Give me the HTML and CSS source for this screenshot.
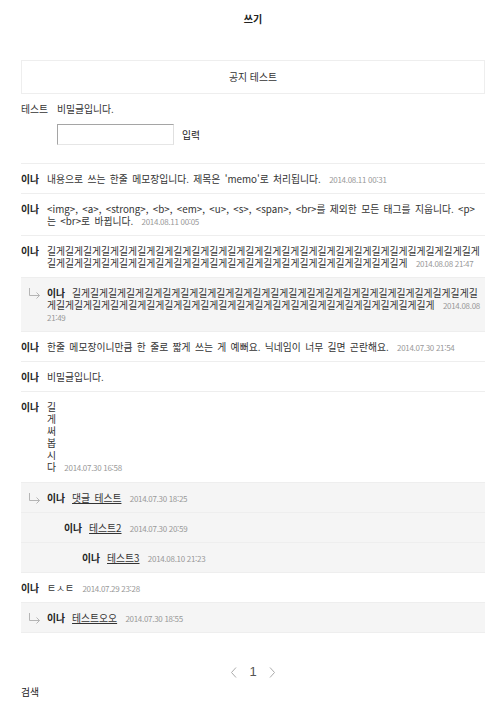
FILE: index.html
```html
<!DOCTYPE html>
<html lang="ko">
<head>
  <meta charset="UTF-8">
  <meta name="viewport" content="width=device-width, height=device-height">
  <link rel="stylesheet" href="styles.css">
</head>
<body>
  <div class="wrap">
    <h1 class="title">쓰기</h1>

    <div class="notice">공지 테스트</div>

    <form class="secret" onsubmit="return false">
      <span class="label">테스트</span>
      <span>비밀글입니다.</span>
      <span></span>
      <span class="field">
        <input type="password" class="pw">
        <button class="enter">입력</button>
      </span>
    </form>

    <ul class="memo-list">
      <li class="memo">
        <span class="nick">이나</span>
        <div class="text">내용으로 쓰는 한줄 메모장입니다. 제목은 'memo'로 처리됩니다. <span class="date">2014.08.11 00:31</span></div>
      </li>
      <li class="memo">
        <span class="nick">이나</span>
        <div class="text">&lt;img&gt;, &lt;a&gt;, &lt;strong&gt;, &lt;b&gt;, &lt;em&gt;, &lt;u&gt;, &lt;s&gt;, &lt;span&gt;, &lt;br&gt;를 제외한 모든 태그를 지웁니다. &lt;p&gt;는 &lt;br&gt;로 바뀝니다. <span class="date">2014.08.11 00:05</span></div>
      </li>
      <li class="memo">
        <span class="nick">이나</span>
        <div class="text">길게길게길게길게길게<!-- -->길게길게길게길게길게<!-- -->길게길게길게길게길게<!-- -->길게길게길게길게길게<!-- -->길게길게길게길게길게<!-- -->길게길게길게길게길게<!-- -->길게길게길게길게길게<!-- -->길게길게길게길게길게<!-- -->길게길게길게길게 <span class="date">2014.08.08 21:47</span></div>
      </li>
      <li class="memo reply depth1">
        <svg class="arrow" width="13" height="11" viewBox="0 0 13 11"><path d="M1.5 0V7.5H11.5M8.5 4.5L11.5 7.5L8.5 10.5" fill="none" stroke="#b5b5b5" stroke-width="1"/></svg><span class="nick">이나</span>길게길게길게길게길게<!-- -->길게길게길게길게길게<!-- -->길게길게길게길게길게<!-- -->길게길게길게길게길게<!-- -->길게길게길게길게길게<!-- -->길게길게길게길게길게<!-- -->길게길게길게길게길게<!-- -->길게길게길게길게길게<!-- -->길게길게길게길게 <span class="date">2014.08.08 21:49</span>
      </li>
      <li class="memo">
        <span class="nick">이나</span>
        <div class="text">한줄 메모장이니만큼 한 줄로 짧게 쓰는 게 예뻐요. 닉네임이 너무 길면 곤란해요. <span class="date">2014.07.30 21:54</span></div>
      </li>
      <li class="memo">
        <span class="nick">이나</span>
        <div class="text">비밀글입니다.</div>
      </li>
      <li class="memo tall">
        <span class="nick">이나</span>
        <div class="text">길<br>게<br>써<br>봅<br>시<br>다 <span class="date">2014.07.30 16:58</span></div>
      </li>
      <li class="memo reply depth1">
        <svg class="arrow" width="13" height="11" viewBox="0 0 13 11"><path d="M1.5 0V7.5H11.5M8.5 4.5L11.5 7.5L8.5 10.5" fill="none" stroke="#b5b5b5" stroke-width="1"/></svg><span class="nick">이나</span><a href="#" class="link">댓글 테스트</a> <span class="date">2014.07.30 18:25</span>
      </li>
      <li class="memo reply depth2">
        <span class="nick">이나</span><a href="#" class="link">테스트2</a> <span class="date">2014.07.30 20:59</span>
      </li>
      <li class="memo reply depth3">
        <span class="nick">이나</span><a href="#" class="link">테스트3</a> <span class="date">2014.08.10 21:23</span>
      </li>
      <li class="memo">
        <span class="nick">이나</span>
        <div class="text">ㅌㅅㅌ <span class="date">2014.07.29 23:28</span></div>
      </li>
      <li class="memo reply depth1">
        <svg class="arrow" width="13" height="11" viewBox="0 0 13 11"><path d="M1.5 0V7.5H11.5M8.5 4.5L11.5 7.5L8.5 10.5" fill="none" stroke="#b5b5b5" stroke-width="1"/></svg><span class="nick">이나</span><a href="#" class="link">테스트오오</a> <span class="date">2014.07.30 18:55</span>
      </li>
    </ul>

    <div class="paging">
      <a href="#" class="page-arrow"><svg width="7" height="11" viewBox="0 0 7 11"><path d="M6 0.5L1.5 5.5L6 10.5" fill="none" stroke="#aaa" stroke-width="1"/></svg></a>
      <span class="page-num">1</span>
      <a href="#" class="page-arrow"><svg width="7" height="11" viewBox="0 0 7 11"><path d="M1 0.5L5.5 5.5L1 10.5" fill="none" stroke="#aaa" stroke-width="1"/></svg></a>
    </div>

    <div class="search">검색</div>
  </div>
</body>
</html>
```

FILE: styles.css
```css
body {
  margin: 0;
  font-family: "Noto Sans CJK KR", "Liberation Sans", sans-serif;
  font-size: 9.8px;
  line-height: 12px;
  color: #333;
}

.wrap {
  padding: 0 15px 0 21px;
}

.title {
  margin: 0 0 35px;
  padding-top: 13px;
  font-size: 10px;
  line-height: 12px;
  font-weight: bold;
  color: #222;
  text-align: center;
}

.notice {
  height: 32px;
  line-height: 32px;
  border: 1px solid #eee;
  text-align: center;
}

.secret {
  display: grid;
  grid-template-columns: 36px 1fr;
  row-gap: 9px;
  margin: 9px 0 18px;
}

.field {
  display: flex;
  align-items: center;
}

.pw {
  box-sizing: border-box;
  width: 117px;
  height: 21px;
  margin: 0;
  padding: 0 3px;
  border: 1px solid;
  border-color: #a5a5a5 #e0e0e0 #e6e6e6 #a5a5a5;
  background: #fff;
}

.enter {
  margin-left: 8px;
  padding: 0;
  border: none;
  background: none;
  font: inherit;
  color: #222;
}

.memo-list {
  margin: 0;
  padding: 0;
  list-style: none;
  border-top: 1px solid #eee;
  word-spacing: 1.6px;
}

.memo {
  display: flex;
  padding: 9px 3px 8px 0;
  border-bottom: 1px solid #eee;
}

.tall {
  padding-bottom: 9px;
}

.nick {
  flex: none;
  width: 18px;
  margin-right: 8px;
  font-weight: bold;
  color: #222;
  white-space: nowrap;
}

.text {
  flex: 1;
  word-break: break-all;
}

.date {
  margin-left: 4px;
  font-size: 8px;
  line-height: 8px;
  letter-spacing: -0.3px;
  word-spacing: 0;
  color: #999;
  white-space: nowrap;
}

.reply {
  display: block;
  position: relative;
  background: #f5f5f5;
  word-break: break-all;
}

.reply .nick {
  display: inline;
  margin-right: 7px;
}

.reply .date {
  white-space: normal;
}

.depth1 {
  padding-left: 26px;
}

.depth2 {
  padding-left: 43px;
}

.depth3 {
  padding-left: 61px;
}

.arrow {
  position: absolute;
  left: 7px;
  top: 10px;
}

.link {
  color: #333;
  text-decoration: underline;
}

.paging {
  display: flex;
  justify-content: center;
  align-items: center;
  gap: 12px;
  margin-top: 31px;
  height: 16px;
}

.page-arrow {
  display: flex;
}

.page-num {
  font-family: "Liberation Sans", sans-serif;
  font-size: 13px;
  color: #555;
}

.search {
  margin-top: 6px;
  color: #222;
}
```
